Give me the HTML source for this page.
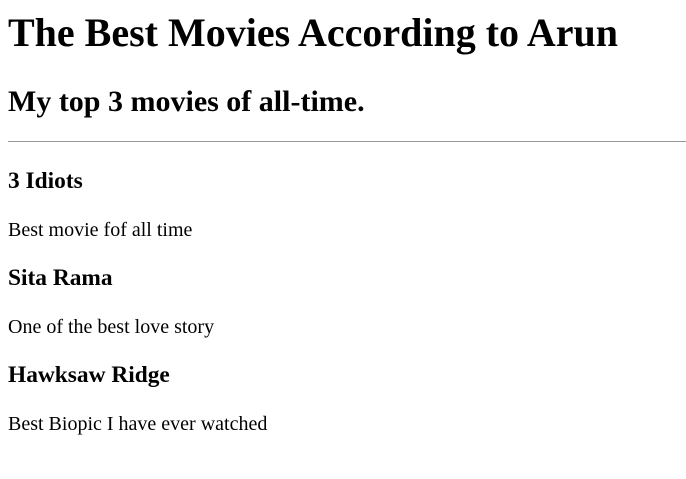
<!DOCTYPE html>
<html><head><meta charset="utf-8"><style>
body{margin:8px;font-family:"Liberation Serif",serif;color:#000;background:#fff;font-size:20px;}
h1{font-size:40px;line-height:46px;margin:10px 0 29px;}
h2{font-size:30px;line-height:34px;margin:0 0 22px;}
h3{font-size:23.4px;line-height:27px;margin:23.5px 0;}
p{line-height:23px;margin:23.5px 0;}
hr{border:none;border-top:1px solid #999;margin:0 -8px 26px 0;height:0;}
</style></head><body>
<h1>The Best Movies According to Arun</h1>
<h2>My top 3 movies of all-time.</h2>
<hr>
<h3 style="margin-top:0">3 Idiots</h3>
<p>Best movie fof all time</p>
<h3>Sita Rama</h3>
<p>One of the best love story</p>
<h3>Hawksaw Ridge</h3>
<p>Best Biopic I have ever watched</p>
</body></html>
